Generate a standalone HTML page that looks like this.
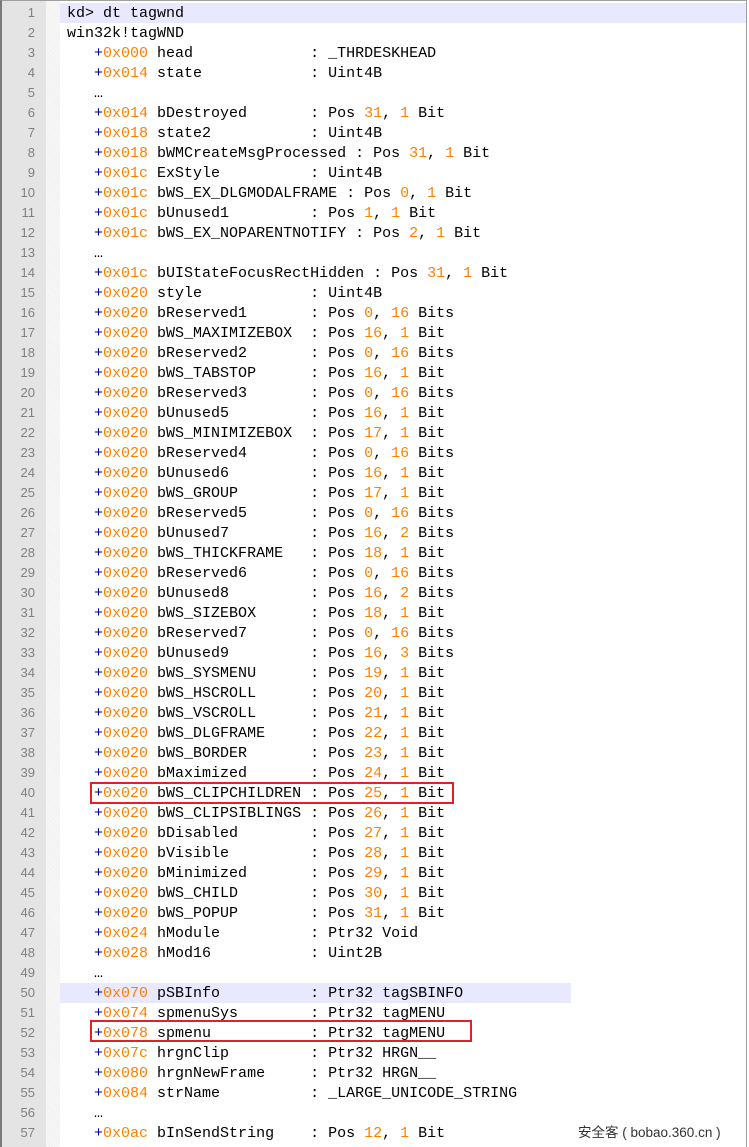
<!DOCTYPE html>
<html><head><meta charset="utf-8"><style>
body{margin:0;width:749px;height:1147px;background:#fff;position:relative;overflow:hidden;font-family:"Liberation Mono",monospace;font-size:15px}
#frame{position:absolute;left:0;top:0;width:747px;height:1147px;border-left:2px solid #7a7a7a;border-top:1px solid #a0a0a0;border-right:1px solid #a0a0a0;box-sizing:border-box}
#gut{position:absolute;left:2px;top:1px;width:44px;height:1146px;background:#e4e4e4}
#dot{position:absolute;left:46px;top:1px;width:14px;height:1146px;background:repeating-linear-gradient(45deg,#f0f0f0 0 1px,#fafafa 1px 2px)}
.ln{position:absolute;left:1px;width:34px;text-align:right;color:#808080;font-family:"Liberation Sans",sans-serif;font-size:13px;line-height:20px}
.tx{position:absolute;left:67px;white-space:pre;line-height:20px;color:#000}
.hl{position:absolute;background:#e8e8ff;height:20px}
.p{color:#0000a0}.o{color:#ff8000}
.box{position:absolute;border:2px solid #e0202a;box-sizing:border-box}
#wm{position:absolute;left:578px;top:1121px;font-family:"Liberation Sans","Noto Sans CJK SC",sans-serif;font-size:13.5px;color:#333;white-space:pre}
</style></head><body>
<div id="gut"></div><div id="dot"></div>
<div class="hl" style="left:60px;top:3px;width:686px"></div>
<div class="hl" style="left:60px;top:983px;width:511px"></div>
<div id="frame"></div>
<div id="c"></div>
<div class="box" style="left:90px;top:782px;width:364px;height:22px"></div>
<div class="box" style="left:90px;top:1020px;width:382px;height:22px"></div>
<div id="wm">安全客 ( bobao.360.cn )</div>
<script>
var L=["kd> dt tagwnd","win32k!tagWND",
"+0x000 head             : _THRDESKHEAD",
"+0x014 state            : Uint4B","…",
"+0x014 bDestroyed       : Pos 31, 1 Bit",
"+0x018 state2           : Uint4B",
"+0x018 bWMCreateMsgProcessed : Pos 31, 1 Bit",
"+0x01c ExStyle          : Uint4B",
"+0x01c bWS_EX_DLGMODALFRAME : Pos 0, 1 Bit",
"+0x01c bUnused1         : Pos 1, 1 Bit",
"+0x01c bWS_EX_NOPARENTNOTIFY : Pos 2, 1 Bit","…",
"+0x01c bUIStateFocusRectHidden : Pos 31, 1 Bit",
"+0x020 style            : Uint4B",
"+0x020 bReserved1       : Pos 0, 16 Bits",
"+0x020 bWS_MAXIMIZEBOX  : Pos 16, 1 Bit",
"+0x020 bReserved2       : Pos 0, 16 Bits",
"+0x020 bWS_TABSTOP      : Pos 16, 1 Bit",
"+0x020 bReserved3       : Pos 0, 16 Bits",
"+0x020 bUnused5         : Pos 16, 1 Bit",
"+0x020 bWS_MINIMIZEBOX  : Pos 17, 1 Bit",
"+0x020 bReserved4       : Pos 0, 16 Bits",
"+0x020 bUnused6         : Pos 16, 1 Bit",
"+0x020 bWS_GROUP        : Pos 17, 1 Bit",
"+0x020 bReserved5       : Pos 0, 16 Bits",
"+0x020 bUnused7         : Pos 16, 2 Bits",
"+0x020 bWS_THICKFRAME   : Pos 18, 1 Bit",
"+0x020 bReserved6       : Pos 0, 16 Bits",
"+0x020 bUnused8         : Pos 16, 2 Bits",
"+0x020 bWS_SIZEBOX      : Pos 18, 1 Bit",
"+0x020 bReserved7       : Pos 0, 16 Bits",
"+0x020 bUnused9         : Pos 16, 3 Bits",
"+0x020 bWS_SYSMENU      : Pos 19, 1 Bit",
"+0x020 bWS_HSCROLL      : Pos 20, 1 Bit",
"+0x020 bWS_VSCROLL      : Pos 21, 1 Bit",
"+0x020 bWS_DLGFRAME     : Pos 22, 1 Bit",
"+0x020 bWS_BORDER       : Pos 23, 1 Bit",
"+0x020 bMaximized       : Pos 24, 1 Bit",
"+0x020 bWS_CLIPCHILDREN : Pos 25, 1 Bit",
"+0x020 bWS_CLIPSIBLINGS : Pos 26, 1 Bit",
"+0x020 bDisabled        : Pos 27, 1 Bit",
"+0x020 bVisible         : Pos 28, 1 Bit",
"+0x020 bMinimized       : Pos 29, 1 Bit",
"+0x020 bWS_CHILD        : Pos 30, 1 Bit",
"+0x020 bWS_POPUP        : Pos 31, 1 Bit",
"+0x024 hModule          : Ptr32 Void",
"+0x028 hMod16           : Uint2B","…",
"+0x070 pSBInfo          : Ptr32 tagSBINFO",
"+0x074 spmenuSys        : Ptr32 tagMENU",
"+0x078 spmenu           : Ptr32 tagMENU",
"+0x07c hrgnClip         : Ptr32 HRGN__",
"+0x080 hrgnNewFrame     : Ptr32 HRGN__",
"+0x084 strName          : _LARGE_UNICODE_STRING","…",
"+0x0ac bInSendString    : Pos 12, 1 Bit"];
var h="";
L.forEach(function(s,i){var t=3+20*i;
h+='<div class="ln" style="top:'+t+'px">'+(i+1)+'</div>';
var x;
if(i<2)x=s.replace(/>/g,'&gt;');
else{x='   '+s.replace(/^\+(0x[0-9a-f]+)/,'<span class="p">+</span><span class="o">$1</span>').replace(/Pos (\d+), (\d+)/,'Pos <span class="o">$1</span>, <span class="o">$2</span>');}
h+='<div class="tx" style="top:'+(t+1)+'px">'+x+'</div>';});
document.getElementById('c').innerHTML=h;
</script>
</body></html>
